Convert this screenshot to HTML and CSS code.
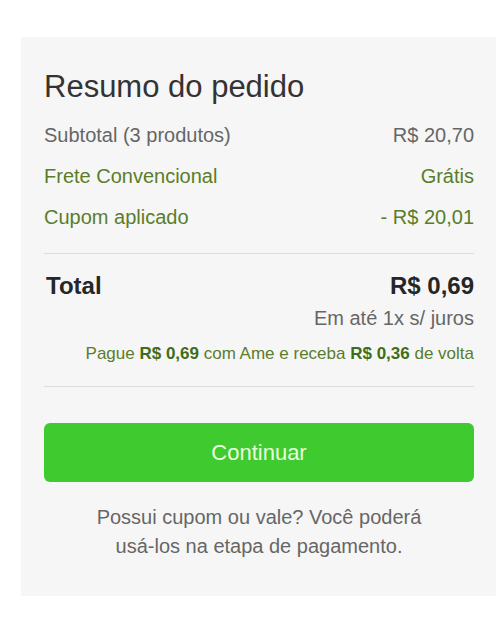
FILE: index.html
```html
<html>
    <head>
        <title>Resumo do pedido</title>
        <link rel="stylesheet" href="styles.css">
    </head>
    <body>
        <div class="summary">
            <h2 class="summary-title">Resumo do pedido</h2>
            <div class="lines">
                <div class="line">
                    <span>Subtotal (3 produtos)</span>
                    <span>R$ 20,70</span>
                </div>
                <div class="line green">
                    <span>Frete Convencional</span>
                    <span>Grátis</span>
                </div>
                <div class="line green">
                    <span>Cupom aplicado</span>
                    <span>- R$ 20,01</span>
                </div>
            </div>
            <div class="totals">
                <div class="total">
                    <span>Total</span>
                    <span>R$ 0,69</span>
                </div>
                <div class="installments">Em até 1x s/ juros</div>
                <div class="cashback">Pague <b>R$ 0,69</b> com Ame e receba <b>R$ 0,36</b> de volta</div>
            </div>
            <button class="continue">Continuar</button>
            <p class="coupon-note">Possui cupom ou vale? Você poderá<br/>usá-los na etapa de pagamento.</p>
        </div>
    </body>
</html>
```

FILE: styles.css
```css
* {
    box-sizing: border-box;
}
body {
    margin: 0;
    padding: 37px 4px 0 21px;
    background-color: #ffffff;
    font-family: "Liberation Sans", Arial, sans-serif;
}
.summary {
    background-color: #f6f6f6;
    padding: 32px 22px 35px 23px;
    display: flex;
    flex-direction: column;
}
.summary-title {
    margin: 0 0 10px 0;
    font-size: 31px;
    font-weight: normal;
    line-height: 36px;
    color: #333333;
}
.lines {
    padding-bottom: 15px;
    border-bottom: 1px solid #dcdcdc;
}
.line {
    display: flex;
    justify-content: space-between;
    font-size: 20px;
    line-height: 41px;
    color: #666666;
}
.line.green {
    color: #5a7d2a;
}
.totals {
    padding: 17px 0 20px 0;
    border-bottom: 1px solid #dcdcdc;
    display: flex;
    flex-direction: column;
    align-items: flex-end;
}
.total {
    align-self: stretch;
    display: flex;
    justify-content: space-between;
    font-size: 24px;
    font-weight: bold;
    line-height: 30px;
    color: #262626;
    padding-left: 2px;
}
.installments {
    margin-top: 4px;
    font-size: 20px;
    line-height: 26px;
    color: #666666;
}
.cashback {
    margin-top: 11px;
    font-size: 17px;
    line-height: 24px;
    color: #5a7d2a;
}
.cashback b {
    color: #3f6d18;
}
.continue {
    margin-top: 36px;
    height: 59px;
    border: none;
    border-radius: 6px;
    background-color: #3fcb2f;
    color: #e9ffdc;
    font-family: inherit;
    font-size: 22px;
}
.coupon-note {
    margin: 21px 0 0 0;
    text-align: center;
    font-size: 20px;
    line-height: 29px;
    color: #666666;
}
```
